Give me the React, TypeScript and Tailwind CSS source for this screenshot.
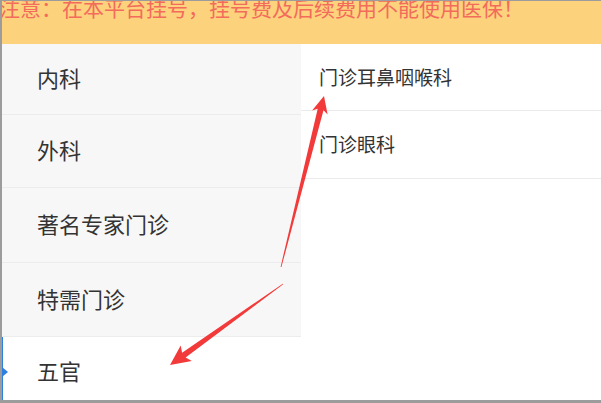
const font = { fontFamily: '"Noto Sans CJK SC", "Noto Sans", sans-serif' };

const leftItems = [
  { name: "内科", h: "h-[71px]" },
  { name: "外科", h: "h-[73px]" },
  { name: "著名专家门诊", h: "h-[75px]" },
  { name: "特需门诊", h: "h-[74px]" },
];

const rightItems = [
  { name: "门诊耳鼻咽喉科", h: "h-[67px]" },
  { name: "门诊眼科", h: "h-[68px]" },
];

// tapered annotation arrow: thin tail, thick end, triangular head
function arrowPoints(tx: number, ty: number, px: number, py: number, headLen: number, headW: number, shaftW: number) {
  const dx = px - tx;
  const dy = py - ty;
  const len = Math.hypot(dx, dy);
  const ux = dx / len;
  const uy = dy / len;
  const nx = -uy;
  const ny = ux;
  const hx = px - ux * headLen;
  const hy = py - uy * headLen;
  const nb = px - ux * (headLen - 3);
  const nby = py - uy * (headLen - 3);
  const pts = [
    [tx + nx * 0.4, ty + ny * 0.4],
    [nb + nx * shaftW / 2, nby + ny * shaftW / 2],
    [hx + nx * headW / 2, hy + ny * headW / 2],
    [px, py],
    [hx - nx * headW / 2, hy - ny * headW / 2],
    [nb - nx * shaftW / 2, nby - ny * shaftW / 2],
    [tx - nx * 0.4, ty - ny * 0.4],
  ];
  return pts.map((p) => p.map((v) => v.toFixed(1)).join(",")).join(" ");
}

export default function App() {
  return (
    <div className="relative w-[601px] h-[403px] overflow-hidden bg-white border-l-2 border-t border-b-[3px] border-[#9c9c9c]" style={font}>
      <div className="h-[43px] bg-[#fdd27d] overflow-hidden">
        <div className="-mt-[8px] -ml-[3px] whitespace-nowrap text-[21px] leading-[28px] text-[#f26b5b]">
          注意：在本平台挂号，挂号费及后续费用不能使用医保！
        </div>
      </div>

      <div className="flex h-[356px]">
        <div className="w-[299px] bg-[#f7f7f7] flex flex-col">
          {leftItems.map((item) => (
            <div key={item.name} className={`${item.h} flex items-center pl-[35px] pb-[3px] border-b border-[#ececec] text-[22px] text-[#333]`}>
              {item.name}
            </div>
          ))}
          <div className="relative flex-1 flex items-center pl-[35px] pt-[4px] bg-white text-[22px] text-[#333]">
            <span className="absolute left-0 top-0 bottom-0 w-px bg-[#2d7fe0]" />
            <span className="absolute left-0 top-[30px] w-0 h-0 border-y-[5px] border-y-transparent border-l-[6px] border-l-[#2d7fe0]" />
            五官
          </div>
        </div>
        <div className="flex-1 flex flex-col">
          {rightItems.map((item) => (
            <div key={item.name} className={`${item.h} flex items-center pl-[18px] border-b border-[#ebebeb] text-[19px] text-[#333]`}>
              {item.name}
            </div>
          ))}
        </div>
      </div>

      <svg className="absolute left-0 top-0 pointer-events-none" width="601" height="403" viewBox="0 0 601 403">
        <polygon points={arrowPoints(279, 266, 322, 95, 17, 16, 6)} fill="#f33a3a" />
        <polygon points={arrowPoints(281, 283, 168, 364, 20, 19, 6)} fill="#f33a3a" />
      </svg>
    </div>
  );
}
